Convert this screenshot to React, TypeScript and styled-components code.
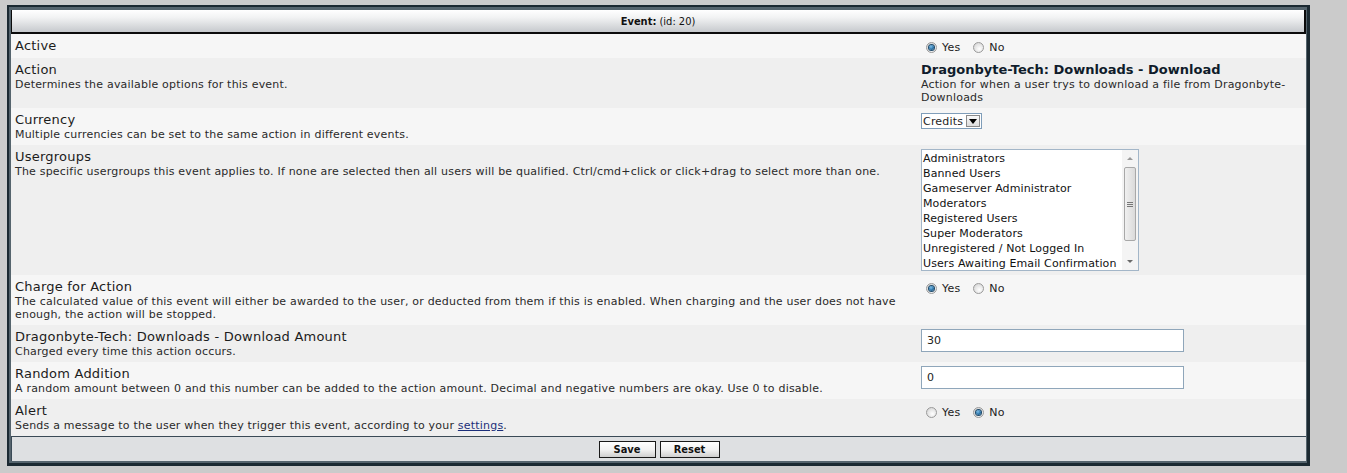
import React from "react";
import styled, { createGlobalStyle } from "styled-components";

const GlobalStyle = createGlobalStyle`
  html, body {
    margin: 0;
    padding: 0;
    background: #cbcbcb;
  }
  body {
    font-family: "DejaVu Sans", Verdana, sans-serif;
    color: #1e1e1e;
  }
`;

const Page = styled.div`
  padding: 5px 0 0 7px;
`;

const Frame = styled.div`
  width: 1303px;
  box-sizing: border-box;
  border: 2px solid #1b2931;
  border-right-width: 3px;
  border-bottom-width: 3px;
`;

const Inner = styled.div`
  border: 2px solid #55646d;
  border-top-width: 3px;
  border-right-width: 1px;
`;

const Header = styled.div`
  height: 22px;
  display: flex;
  align-items: center;
  justify-content: center;
  background: linear-gradient(#ffffff 0%, #f1f2f3 35%, #c6c9cd 100%);
  border-left: 1px solid #0b0b0b;
  border-right: 2px solid #0b0b0b;
  border-bottom: 2px solid #0b0b0b;
  font-family: "DejaVu Sans Condensed", Tahoma, sans-serif;
  font-size: 11px;
  color: #111;
  b {
    font-weight: bold;
  }
`;

const Row = styled.div<{ $alt?: boolean }>`
  display: grid;
  grid-template-columns: 906px 1fr;
  background: ${(p) => (p.$alt ? "#efefef" : "#f6f6f6")};
`;

const Cell = styled.div`
  padding: 4px;
  min-width: 0;
`;

const Label = styled.div`
  font-size: 13px;
  line-height: 16px;
  letter-spacing: 0.22px;
  color: #1c1c1c;
`;

const Desc = styled.div`
  font-size: 11px;
  line-height: 13px;
  letter-spacing: 0.2px;
  color: #2a2a2a;
  a {
    color: #1c2f7a;
    text-decoration: underline;
  }
`;

const ValueTitle = styled.div`
  font-size: 13px;
  line-height: 16px;
  font-weight: bold;
  color: #0f1c2b;
`;

const RadioGroup = styled.div`
  display: flex;
  align-items: center;
  height: 14px;
  margin-top: 2px;
  font-size: 11px;
  letter-spacing: 0.2px;
  color: #222;
`;

const RadioLabel = styled.label`
  display: flex;
  align-items: center;
  margin-right: 8px;
`;

const RadioDot = styled.span<{ $on?: boolean }>`
  width: 11px;
  height: 11px;
  box-sizing: border-box;
  border-radius: 50%;
  margin: 0 5px;
  border: 1px solid #9a9a9a;
  background: radial-gradient(circle at 60% 65%, #ffffff 0%, #e2e2e2 60%, #c9c9c9 100%);
  display: flex;
  align-items: center;
  justify-content: center;
  &::after {
    content: "";
    display: ${(p) => (p.$on ? "block" : "none")};
    width: 5px;
    height: 5px;
    border-radius: 50%;
    background: radial-gradient(circle at 40% 35%, #7fc0ea 0%, #2a73a8 55%, #0f3c62 100%);
    box-shadow: 0 0 0 1px #1f4a6a;
  }
`;

const SelectBox = styled.div`
  display: flex;
  width: fit-content;
  align-items: center;
  height: 16px;
  box-sizing: border-box;
  border: 1px solid #7f9db9;
  background: #fff;
  font-size: 11px;
  letter-spacing: 0.2px;
  margin-top: 1px;
  padding-left: 1px;
`;

const SelectArrow = styled.span`
  width: 14px;
  height: 12px;
  margin: 0 1px 0 3px;
  box-sizing: border-box;
  border: 1px solid #8a8a8a;
  background: linear-gradient(#fafafa, #dcdcdc);
  display: flex;
  align-items: center;
  justify-content: center;
  &::after {
    content: "";
    border-left: 4px solid transparent;
    border-right: 4px solid transparent;
    border-top: 5px solid #000;
  }
`;

const ListBox = styled.div`
  width: 218px;
  height: 122px;
  box-sizing: border-box;
  border: 1px solid #a3b6c8;
  background: #fff;
  display: flex;
`;

const ListItems = styled.div`
  flex: 1;
  padding: 1px 0 0 1px;
  overflow: hidden;
`;

const ListItem = styled.div`
  font-size: 11px;
  line-height: 15px;
  letter-spacing: 0.1px;
  white-space: nowrap;
  color: #111;
`;

const ScrollBar = styled.div`
  width: 16px;
  display: flex;
  flex-direction: column;
  align-items: center;
  background: #f4f4f4;
`;

const ScrollBtn = styled.div<{ $down?: boolean }>`
  height: 17px;
  width: 16px;
  display: flex;
  align-items: center;
  justify-content: center;
  &::after {
    content: "";
    border-left: 3px solid transparent;
    border-right: 3px solid transparent;
    ${(p) =>
      p.$down ? "border-top: 3px solid #6a6a6a;" : "border-bottom: 3px solid #9a9a9a;"}
  }
`;

const ScrollThumb = styled.div`
  flex: 0 0 74px;
  width: 12px;
  box-sizing: border-box;
  border: 1px solid #a8a8a8;
  border-radius: 2px;
  background: linear-gradient(90deg, #f0f0f0, #dadada);
  display: flex;
  align-items: center;
  justify-content: center;
  &::after {
    content: "";
    width: 6px;
    height: 5px;
    background: repeating-linear-gradient(#777 0 1px, transparent 1px 2px);
  }
`;

const ScrollTrack = styled.div`
  flex: 1;
`;

const TextInput = styled.input`
  display: block;
  width: 263px;
  height: 23px;
  box-sizing: border-box;
  border: 1px solid #8fa6ba;
  background: #fff;
  padding: 0 5px;
  font-family: "DejaVu Sans", Verdana, sans-serif;
  font-size: 11px;
  color: #222;
  outline: none;
`;

const Footer = styled.div`
  height: 24px;
  display: flex;
  align-items: center;
  justify-content: center;
  gap: 4px;
  background: #dee0e2;
  border-top: 1px solid #3a4a56;
  border-left: 1px solid #3a4a56;
`;

const Button = styled.button<{ $w: number }>`
  width: ${(p) => p.$w}px;
  height: 17px;
  padding: 0;
  box-sizing: border-box;
  border: 1px solid #1a1a1a;
  background: linear-gradient(#ffffff 0%, #f3f3f3 50%, #cfcfcf 100%);
  font-family: "DejaVu Sans Condensed", Tahoma, sans-serif;
  font-weight: bold;
  font-size: 11px;
  color: #111;
  line-height: 15px;
`;

const Radios: React.FC<{ yes: boolean }> = ({ yes }) => (
  <RadioGroup>
    <RadioLabel>
      <RadioDot $on={yes} />
      Yes
    </RadioLabel>
    <RadioLabel>
      <RadioDot $on={!yes} />
      No
    </RadioLabel>
  </RadioGroup>
);

const groups = [
  "Administrators",
  "Banned Users",
  "Gameserver Administrator",
  "Moderators",
  "Registered Users",
  "Super Moderators",
  "Unregistered / Not Logged In",
  "Users Awaiting Email Confirmation",
];

export default function App() {
  return (
    <Page>
      <GlobalStyle />
      <Frame>
        <Inner>
          <Header>
            <b>Event:</b>&nbsp;(id: 20)
          </Header>

          <Row>
            <Cell>
              <Label>Active</Label>
            </Cell>
            <Cell>
              <Radios yes />
            </Cell>
          </Row>

          <Row $alt>
            <Cell>
              <Label>Action</Label>
              <Desc>Determines the available options for this event.</Desc>
            </Cell>
            <Cell>
              <ValueTitle>Dragonbyte-Tech: Downloads - Download</ValueTitle>
              <Desc>Action for when a user trys to download a file from Dragonbyte-Downloads</Desc>
            </Cell>
          </Row>

          <Row>
            <Cell>
              <Label>Currency</Label>
              <Desc>Multiple currencies can be set to the same action in different events.</Desc>
            </Cell>
            <Cell>
              <SelectBox>
                Credits
                <SelectArrow />
              </SelectBox>
            </Cell>
          </Row>

          <Row $alt>
            <Cell>
              <Label>Usergroups</Label>
              <Desc>
                The specific usergroups this event applies to. If none are selected then all users
                will be qualified. Ctrl/cmd+click or click+drag to select more than one.
              </Desc>
            </Cell>
            <Cell>
              <ListBox>
                <ListItems>
                  {groups.map((g) => (
                    <ListItem key={g}>{g}</ListItem>
                  ))}
                </ListItems>
                <ScrollBar>
                  <ScrollBtn />
                  <ScrollThumb />
                  <ScrollTrack />
                  <ScrollBtn $down />
                </ScrollBar>
              </ListBox>
            </Cell>
          </Row>

          <Row>
            <Cell>
              <Label>Charge for Action</Label>
              <Desc>
                The calculated value of this event will either be awarded to the user, or deducted
                from them if this is enabled. When charging and the user does not have enough, the
                action will be stopped.
              </Desc>
            </Cell>
            <Cell>
              <Radios yes />
            </Cell>
          </Row>

          <Row $alt>
            <Cell>
              <Label>Dragonbyte-Tech: Downloads - Download Amount</Label>
              <Desc>Charged every time this action occurs.</Desc>
            </Cell>
            <Cell>
              <TextInput defaultValue="30" />
            </Cell>
          </Row>

          <Row>
            <Cell>
              <Label>Random Addition</Label>
              <Desc>
                A random amount between 0 and this number can be added to the action amount.
                Decimal and negative numbers are okay. Use 0 to disable.
              </Desc>
            </Cell>
            <Cell>
              <TextInput defaultValue="0" />
            </Cell>
          </Row>

          <Row $alt>
            <Cell>
              <Label>Alert</Label>
              <Desc>
                Sends a message to the user when they trigger this event, according to your{" "}
                <a href="#">settings</a>.
              </Desc>
            </Cell>
            <Cell>
              <Radios yes={false} />
            </Cell>
          </Row>

          <Footer>
            <Button $w={57}>Save</Button>
            <Button $w={60}>Reset</Button>
          </Footer>
        </Inner>
      </Frame>
    </Page>
  );
}
